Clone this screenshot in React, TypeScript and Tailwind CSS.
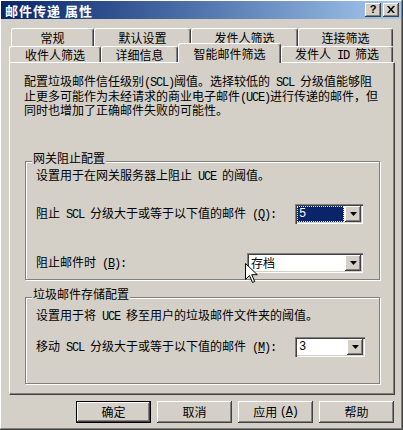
import React from "react";

const bevel = "shadow-[inset_-1px_-1px_0_#404040,inset_1px_1px_0_#fff,inset_-2px_-2px_0_#808080]";
const sunken = "shadow-[inset_1px_1px_0_#808080,inset_2px_2px_0_#404040,inset_-1px_-1px_0_#fff,inset_-2px_-2px_0_#d4d0c8]";

function Mono({ children, u }: { children: React.ReactNode; u?: boolean }) {
  return (
    <span className={`font-['Liberation_Mono',monospace] text-[12px] tracking-[-1.2px] ${u ? "underline underline-offset-[1px]" : ""}`}>
      {children}
    </span>
  );
}

// split latin runs out so they get the narrow half-width look
function Txt({ s }: { s: string }) {
  const parts = s.split(/([\x20-\x7e]+)/);
  return (
    <>
      {parts.map((p, i) => (i % 2 ? <Mono key={i}>{p}</Mono> : <React.Fragment key={i}>{p}</React.Fragment>))}
    </>
  );
}

function Arrow() {
  return (
    <svg width="7" height="4" viewBox="0 0 7 4">
      <path d="M0 0h7L3.5 4z" fill="#000" />
    </svg>
  );
}

function Combo({ width, value, focused }: { width: string; value: string; focused?: boolean }) {
  return (
    <div className={`${width} h-[20px] bg-white p-[2px] flex ${sunken}`}>
      {focused ? (
        <div className="flex-1 mr-[1px] bg-[#0a246a] text-white border border-dotted border-[#f0ec9c] flex items-center pl-[1px]">
          <Txt s={value} />
        </div>
      ) : (
        <div className="flex-1 flex items-center pl-[2px]">
          <Txt s={value} />
        </div>
      )}
      <div className={`w-[16px] h-full bg-[#d4d0c8] flex items-center justify-center ${bevel}`}>
        <Arrow />
      </div>
    </div>
  );
}

function Tab({ label, width, selected }: { label: React.ReactNode; width: string; selected?: boolean }) {
  return (
    <div
      className={`${width} flex justify-center border-l border-t border-white border-r border-r-[#404040] rounded-t-[3px] bg-[#d4d0c8] shadow-[inset_-1px_0_0_#808080] ${
        selected ? "relative z-10 -mt-[3px] h-[20px] items-start pt-[4px]" : "h-full items-center"
      }`}
    >
      <span className="whitespace-pre">{label}</span>
    </div>
  );
}

function Button({ children, isDefault }: { children: React.ReactNode; isDefault?: boolean }) {
  return (
    <div
      className={`w-[75px] h-[22px] flex items-center justify-center bg-[#d4d0c8] whitespace-pre ${
        isDefault ? "border border-black" : ""
      } ${bevel}`}
    >
      {children}
    </div>
  );
}

function Group({ title, className, children }: { title: string; className: string; children: React.ReactNode }) {
  return (
    <div className={`relative ml-[1px] w-[355px] border border-[#808080] shadow-[1px_1px_0_#fff,inset_1px_1px_0_#fff] pl-[10px] ${className}`}>
      <div className="absolute -top-[10px] left-[6px] px-[1px] bg-[#d4d0c8]">{title}</div>
      {children}
    </div>
  );
}

export default function App() {
  return (
    <div className="relative w-[403px] h-[430px] bg-[#d4d0c8] border-r border-b border-[#404040] font-['Noto_Sans_CJK_SC',sans-serif] text-[12px] leading-[12px] text-black overflow-hidden select-none">
      <div className="h-full flex flex-col border-l border-t border-white border-r border-b border-r-[#808080] border-b-[#808080]">
        {/* title bar */}
        <div className="h-[18px] flex items-center pl-[4px] pr-[2px] bg-linear-to-r from-[#0a246a] to-[#a6caf0]">
          <span className="text-white font-bold text-[13px] leading-[13px] tracking-[1px] whitespace-pre">邮件传递 属性</span>
          <div className="ml-auto flex gap-[2px]">
            <div className={`w-[16px] h-[14px] bg-[#d4d0c8] flex items-center justify-center ${bevel}`}>
              <span className="font-['Liberation_Sans',sans-serif] font-bold text-[11px] leading-[11px] -mt-[1px]">?</span>
            </div>
            <div className={`w-[16px] h-[14px] bg-[#d4d0c8] flex items-center justify-center ${bevel}`}>
              <svg width="8" height="7" viewBox="0 0 8 7" className="-mt-[1px]">
                <path d="M0 0h2l2 2.5L6 0h2L5 3.5 8 7H6L4 4.5 2 7H0l3-3.5z" fill="#000" />
              </svg>
            </div>
          </div>
        </div>

        {/* tabs */}
        <div className="mt-[9px]">
          <div className="flex pl-[10px] h-[18px]">
            <Tab label="常规" width="w-[83px]" />
            <Tab label="默认设置" width="w-[97px]" />
            <Tab label="发件人筛选" width="w-[107px]" />
            <Tab label="连接筛选" width="w-[95px]" />
          </div>
          <div className="flex items-start pl-[8px] h-[16px]">
            <Tab label="收件人筛选" width="w-[92px]" />
            <Tab label="详细信息" width="w-[77px]" />
            <Tab label="智能邮件筛选" width="w-[103px]" selected />
            <Tab label={<Txt s="发件人 ID 筛选" />} width="w-[112px]" />
          </div>
        </div>

        {/* page */}
        <div className="ml-[8px] w-[386px] h-[333px] border-l border-t border-white border-r border-b border-r-[#404040] border-b-[#404040] shadow-[inset_-1px_-1px_0_#808080] pl-[14px] pt-[12px]">
          <div className="leading-[12.5px] whitespace-pre">
            <div><Txt s="配置垃圾邮件信任级别(SCL)阈值。选择较低的 SCL 分级值能够阻" /></div>
            <div><Txt s="止更多可能作为未经请求的商业电子邮件(UCE)进行传递的邮件，但" /></div>
            <div>同时也增加了正确邮件失败的可能性。</div>
          </div>

          <Group title="网关阻止配置" className="mt-[44px] h-[119px] pt-[7px]">
            <div className="whitespace-pre"><Txt s="设置用于在网关服务器上阻止 UCE 的阈值。" /></div>
            <div className="mt-[21px] h-[20px] flex items-center">
              <div className="w-[259px] whitespace-pre">
                <Txt s="阻止 SCL 分级大于或等于以下值的邮件 (" />
                <Mono u>Q</Mono>
                <Mono>):</Mono>
              </div>
              <Combo width="w-[68px]" value="5" focused />
            </div>
            <div className="mt-[29px] h-[20px] flex items-center">
              <div className="w-[211px] whitespace-pre">
                <Txt s="阻止邮件时 (" />
                <Mono u>B</Mono>
                <Mono>):</Mono>
              </div>
              <Combo width="w-[116px]" value="存档" />
            </div>
          </Group>

          <Group title="垃圾邮件存储配置" className="mt-[17px] h-[87px] pt-[11px]">
            <div className="whitespace-pre"><Txt s="设置用于将 UCE 移至用户的垃圾邮件文件夹的阈值。" /></div>
            <div className="mt-[14px] h-[20px] flex items-center">
              <div className="w-[259px] whitespace-pre">
                <Txt s="移动 SCL 分级大于或等于以下值的邮件 (" />
                <Mono u>M</Mono>
                <Mono>):</Mono>
              </div>
              <Combo width="w-[70px]" value="3" />
            </div>
          </Group>
        </div>

        {/* buttons */}
        <div className="mt-[6px] flex justify-end gap-[6px] pr-[7px]">
          <Button isDefault>确定</Button>
          <Button>取消</Button>
          <Button>
            应用 <Mono>(</Mono><Mono u>A</Mono><Mono>)</Mono>
          </Button>
          <Button>帮助</Button>
        </div>
      </div>

      {/* mouse pointer */}
      <svg className="absolute left-[245px] top-[263px]" width="13" height="21" viewBox="0 0 13 21">
        <path d="M0.5 0.5v16l4-4 3 7 2.2-1-3-6.8h5.6z" fill="#fff" stroke="#000" strokeWidth="1" />
      </svg>
    </div>
  );
}
